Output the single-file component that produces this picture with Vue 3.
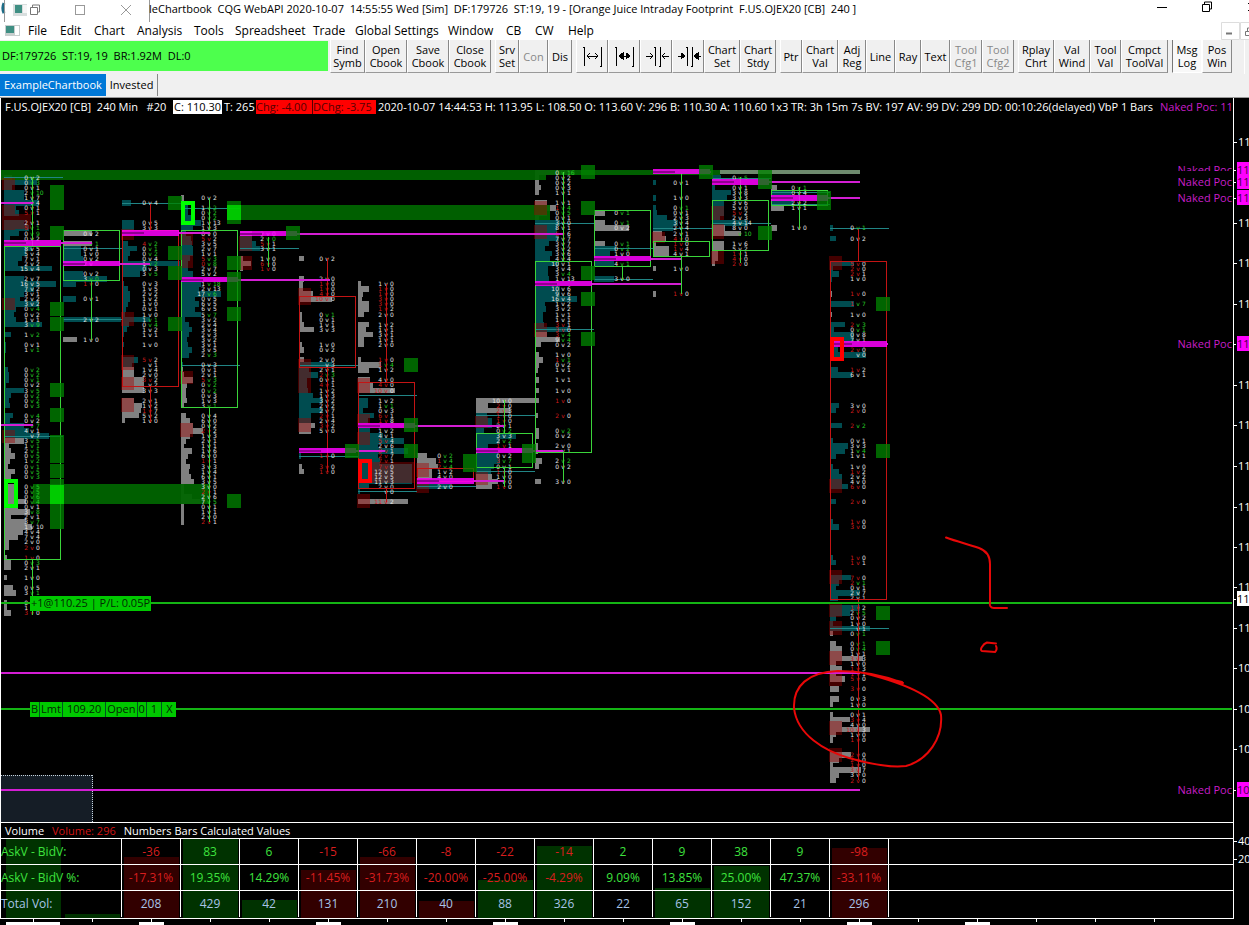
<script setup>
const ROW = 5.065
const rowY = (i) => 174.8 + i * ROW

const menus = ['File', 'Edit', 'Chart', 'Analysis', 'Tools', 'Spreadsheet', 'Trade', 'Global Settings', 'Window', 'CB', 'CW', 'Help']
const menuLefts = [28, 60, 94, 137, 194, 235, 313, 355, 448, 506, 535, 568, 602]

const groups = [
  [['Find Symb', 35], ['Open Cbook', 42], ['Save Cbook', 42], ['Close Cbook', 42]],
  [['Srv Set', 24], ['Con', 29, 'off'], ['Dis', 24]],
  [['Widen spacing', 32, 'icon', 0], ['Widen bars', 32, 'icon', 1], ['Narrow spacing', 32, 'icon', 2], ['Narrow bars', 32, 'icon', 3], ['Chart Set', 36], ['Chart Stdy', 36]],
  [['Ptr', 22], ['Chart Val', 36], ['Adj Reg', 28], ['Line', 29], ['Ray', 26], ['Text', 29], ['Tool Cfg1', 32, 'off'], ['Tool Cfg2', 32, 'off']],
  [['Rplay Chrt', 36], ['Val Wind', 36], ['Tool Val', 31], ['Cmpct ToolVal', 47]],
  [['Msg Log', 30, 'down'], ['Pos Win', 30]],
]
const icons = [
  'M2 2v19M19 2v19M1 2h2M18 21h2M5 11h11M8 8l-3 3 3 3M13 8l3 3-3 3',
  'M2 2v19M19 2v19M1 2h2M18 21h2M5 11h11M9 8l-4 3 4 3zM12 8l4 3-4 3z',
  'M9 2v19M14 2v19M8 2h2M13 21h2M0 11h7M4 8l3 3-3 3M23 11h-7M19 8l-3 3 3 3',
  'M9 2v19M14 2v19M8 2h2M13 21h2M0 11h7M3 8l4 3-4 3zM23 11h-7M20 8l-4 3 4 3z',
]

// "@n" jumps to a price row; other tokens are bid v ask : histogram width + tint
const sources = [
  '@0 0v2:8g 0v3g:33t 0v1:8t 2v10g:20t 1v7:20t v4:35t 0v1:12t r5v1:15t @9 2v1:20t r5v1g:25t 0v9g:15t 0v2:6t @14 8v5:28t 5v4:22t 7v1:18t 2v2:14t 15v4:48t @20 2v7:20t 16v5:52t 7v2:30t 3v1:20t 2v2:16t 3v2:35t 0v4g:12t 0v2:10t 1v1:12t 3v9g:38t @31 1v2g:7t @33 0v1:2t 1v1g:2t @38 0v2g:4t 0v2g:5t 0v1g:5t 0v2:2t 3v5g:20t 0v2g:7t 0v2g:5t 0v3g:6t @47 0v4g:9t 0v2:6t v7g:20t 4v1:25t v7:45t 3v5g:20g 1v1g:5g 2v1g:7g 0v5g:11g 1v2g:6g 0v1g:4g 0v5g:11g 0v3g:7g @61 0v5g:14g 0v5g:14g 0v6g:14g 0v4g:22g 0v1:14g 3v8g:26g 2v1:7g 3v7g:22g 1v10:28g 4v4:19g 7v4:14g 2v0:5g r2v0:5g @75 r1v0:3g 0v3g:7g 2v1:7g @79 1v0:3g @81 0v5:9g 3v1g:12g @84 0v:3g 1v:3g r3v0:7g',
  '@11 0v2:29g @13 v1g:29g 0v1:18t 1v0:18t 0v2:20t 2v:20t @19 0v2:20t 3v0g:44t r1v0:13t @24 0v1:13t @28 2v2:58t @32 1v0:14g',
  '@5 0v4:9t @9 0v5:12t 3v3:12t @13 r4v2g:6t 0v1g:15t 0v2g:8t 0v4:6t 1v2g:58t 0v3:25t 3v5g:18t @21 0v3:2t 1v5:6t 2v2:8t 1v2:8t 1v0:6t 0v1:4t 1v0:3t 1v1g:28t 0v4g:7t 1v2:5t 1v1:2t @33 1v0:2t @36 r5v2:16t v1:10t 1v4:12g 2v0:12g r3v2:22g v2:22g 3v3:22g @44 2v1:12g 1v2:20g r1v7:19g 5v2:17g 1v0:3g',
  '@4 0v2:3g @6 1v2g:7t 0v2g:7t 0v2g:10t 1v13:20t 1v3:12t 0v0:5t r5v2:10t 3v5:11t 2v7:12t 1v1:12t r5v3g:9t r0v8g:7t 2v7:7t 5v2:12t @21 1v18g:20t 2v13:18t 17v6g:40t 0v5:14t 6v5:18t 6v5:14t 5v7g:20t 3v2:4t 2v4:8t 3v4:11t 2v3:8t 3v2:6t 3v1:7t 3v5:11t 2v3g:8t @37 0v3:2t 0v1:2g 2v1:3g r5v3g:12g 0v2g:6g 0v2g:5g 0v3:5g 1v3:6g 3v1g:3g @47 0v4:5g 6v0:9g 0v2:12g r2v2:22g 1v3:9g 2v1:5g 1v1:3g 1v6:11g 6v0:7g r1v1:5g 3v3:9g 1v4:8g 6v1:10g 3v5:13g 3v0:3g r2v1:3g 2v6:11g 7v5g:19g 0v1:3g 1v1:3g 2v0:3g r2v1:3g',
  '@11 2v0:12g 2v0g:12t r5v1:16t 3v1:20t @16 1v0:3g r6v0:11g r1v0:3g',
  '@16 0v2:5g @20 2v0:5g r1v0:4g r1v0:4g r4v0:14g r10v0:33g @27 0v1g:3g 0v1:3g 1v1:5g 3v3:15g @33 1v0:3g 0v2:5g @36 2v0:5g v3:33t 2v1:10t r2v3g:19t 0v1:8t r4v1:8t 1v2:9t 1v3:14t 3v2:24t 2v2:12t 2v7:24t r2v1:12t 2v4:12t r3v2:16g 5v0:12g @55 r1v0:2t @57 r3v0:3g r1v0:5g',
  '@21 1v0:3g r1v0:11g r1v0:5g r3v0:4g r3v0:11g r1v2:11g 2v0:6g @29 1v2:11g 1v1:8g 3v1:15g 1v1:6g 2v0:6g @36 r1v0:3g r1v4g:23g 1v2:11g @40 4v0:12g r4v0:15g r10v0:37g @44 1v2:10t 1v1g:10t 0v3:5t r6v1:16t r1v8:10t @50 1v2:12t 4v1:25t r5v4:46t 2v6:20t r2v1:50t r2v7:20t r7v1:22t r7v0:54t 12v5:54t 12v5:54t 11v3:54t 2v0:11t v0:2t @64 r11v2:50g',
  '@55 0v2g:10g r1v4g:19g r2v4g:21g 1v2:15g 4v0:15g @61 2v0:33t',
  '@44 10v0:61g r2v0:12g r2v3:34g r1v0:11t r1v0:16t 2v1:16t 0v2g:8t 3v3:40t 2v2g:24t r1v1:12t @55 0v2:22t r3v7g:24t 0v1:18t r1v0:15t 1v0:16g v0:22g r1v0:16g',
  '@-1 0v16g:40g 0v2:4g 0v2:4g 0v3:6g 1v1:4g @5 1v1:12g r1v4g:21g 0v5g:12g 0v1:4g 3v0:25t 8v1:22t r5v6:22t 7v7:24t 3v7:14t 3v2:10t 3v6:17t 4v4:15t 10v1:24t 3v4:13t 3v4g:13t 1v13:14t @22 10v6:25t 9v6:25t 16v4:42t 1v2:10t 3v2:11t 1v1:8t 1v1:8t r3v1:9t r3v0:33t r3v4g:12g 9v4g:25g 0v2:6g @35 1v0:4g r1v1g:8g 0v2:4g 1v1:3g @40 1v1:4g @42 1v0:4g @44 r1v0:4g @47 r2v0:3g @50 0v2g:4g 0v2:4g @53 2v0:3g v1:3g @56 2v2g:7g 0v2:4g @60 3v0:6g',
  '@7 0v1g:11g @9 0v1g:11g 0v2:35g @13 0v1g:11g 0v2g:22t 1v0:16t @17 4v1g:20t @20 3v0:20t',
  '@1 0v1:3t @4 1v0:3t @6 0v1g:3t 0v1:4t 2v3:14t 3v4:25t 2v4:20t 2v1:9g r4v0:13g r1v0:3g r1v4:16g 4v1:16g @18 1v0:3g @23 r1v0:3g',
  '@0 0v5g:9t @2 0v1:3t 3v8:19t 3v3:15t 3v6:12t 5v0:12t r5v2:12t 2v3:8t 4v14:36t 8v0:13g v10g:29g @13 1v6:12g 5v2:12g r1v1:6g r4v0:6g r2v0:3g',
  '@2 0v1g:6g 0v4:20t @5 2v2:22t 1v1:13g @10 1v0:6g',
  '@10 0v1g:3t @12 0v2:6t @17 r5v0:24t r2v0:3t r2v1:9t 1v0:2t @23 r1v0:2g @25 r1v7g:24t @27 1v0:2g @29 r2v3g:15t 0v1g:4t 0v8:24t 7v1:24t @34 r2v0:8t v0:36t @38 r1v2:8t 6v1:22t @45 3v0:9t r2v0:6t @49 r2v2g:12t @52 0v1:3t 3v3:18t 1v4g:15t 1v1:6t @57 1v0:3t r1v2:9t 2v2:12t 4v0:12t r6v0:18t @64 r2v0:6t @68 r1v0:3t r3v0:9t @75 r1v0:3t r1v1:6t @79 r7v0:21t r2v1g:9t 0v1:6t 2v7:30t 2v1:8t @85 r1v2:30t 2v5g:20t 0v2:6t 1v0:3t v1:40t 0v1g:3g @92 0v1g:6g 0v4g:12g 1v1:12g r3v3:33g 1v0:6g r1v3:12g r1v1:6g r5v0:15g @101 r3v0:9g @103 0v3:9g 1v0:3g @106 0v1:3g r3v4:20g 4v0:12g r10v3:40g 1v0:6g r1v0:3g @114 r2v0:21g r2v0:9g r1v0:3g r3v7:31g 3v0:9g r2v0:6g',
]
const cells = sources.flatMap((src, col) => {
  let i = 0
  const out = []
  for (const token of src.split(' ')) {
    if (token[0] === '@') { i = Number(token.slice(1)); continue }
    const m = token.match(/^(r?)(\d*)v(\d*)(g?):(\d+)([tg])$/)
    out.push({ x: 4 + col * 59, y: rowY(i), bid: m[2], ask: m[3], w: Number(m[5]), tint: m[6] === 't' ? 'teal' : 'gray',
      bidTone: m[1] ? 'dn' : 'nt', askTone: m[4] ? 'up' : 'nt', midTone: m[4] ? 'up' : m[1] ? 'dn' : 'nt' })
    i++
  }
  return out
})

// zones and squares: x, y, width, height
const zones = [[1, 170, 545, 10], [546, 170, 174, 5], [240, 205, 310, 15], [33, 484, 177, 20]]
const sq = (x, list) => list.map(([a, b]) => [x, a, 14, b - a])
const greens = [
  ...sq(50, [[185, 210], [226, 240], [302, 316], [317, 331], [383, 397], [408, 422], [435, 449], [449, 463], [464, 478], [479, 529]]),
  ...sq(168, [[196, 210], [246, 260], [266, 280], [317, 331]]),
  ...sq(227, [[201, 224], [256, 270], [272, 301], [307, 321], [494, 508]]),
  ...sq(286, [[226, 240]]), ...sq(345, [[444, 458]]), ...sq(404, [[358, 372], [418, 432], [444, 458]]),
  ...sq(463, [[454, 472]]), ...sq(522, [[444, 463]]),
  ...sq(581, [[165, 179], [201, 215], [266, 280], [292, 306], [332, 346]]),
  ...sq(699, [[165, 179]]), ...sq(758, [[170, 189], [226, 240]]), ...sq(817, [[191, 210]]),
  ...sq(876, [[297, 311], [444, 458], [606, 620], [641, 655]]),
]
const brights = [[50, 485, 14, 19], [227, 205, 14, 15]]
const rd = (x, list) => list.map(([a, b]) => [x, a, 13, b - a])
const reds = [
  ...rd(2, [[178, 190], [205, 230], [298, 310], [430, 443]]), [15, 214, 16, 15],
  ...rd(121, [[229, 240], [312, 326], [355, 370], [377, 390], [398, 412]]),
  ...rd(180, [[232, 245], [255, 268], [371, 384], [423, 437]]),
  ...rd(239, [[236, 251], [256, 270]]), ...rd(298, [[288, 305], [359, 393], [418, 432]]),
  ...rd(357, [[378, 393], [414, 427], [432, 445], [494, 508]]), [372, 462, 43, 21],
  ...rd(416, [[463, 477], [478, 493]]), ...rd(475, [[416, 428], [471, 485]]),
  ...rd(534, [[201, 215], [225, 239], [323, 337]]), ...rd(652, [[232, 243]]),
  ...rd(711, [[206, 220], [224, 239], [251, 264]]),
  ...rd(829, [[256, 270], [479, 493], [570, 584], [603, 617], [621, 635], [651, 665], [672, 686], [721, 735], [748, 762]]),
]
const highlights = [[183, 203, 10, 20, 'hi-up'], [6, 481, 10, 25, 'hi-up'], [360, 461, 10, 20, 'hi-dn'], [832, 339, 10, 20, 'hi-dn']]
// POC bands: x, y, height, end of the extension line
const pocs = [[4, 240, 6, 92], [63, 261, 5, 150], [122, 230, 6, 210], [181, 277, 5, 330], [240, 231, 5, 563], [299, 448, 5, 385], [358, 423, 5, 504], [417, 478, 6, 504], [476, 448, 5, 563], [535, 281, 5, 681], [594, 256, 5, 681], [653, 169, 5, 711], [712, 179, 6, 860], [771, 195, 6, 860], [830, 341, 6, 888]]
const pocLines = [[1, 203, 33], [1, 425, 33], [1, 673, 860], [1, 790, 860]]
const bodies = [[4, 246, 559, 'up'], [63, 230, 280, 'up'], [122, 230, 386, 'dn'], [181, 230, 407, 'up'], [299, 296, 367, 'dn'], [358, 382, 488, 'dn'], [417, 468, 481, 'dn'], [476, 433, 467, 'up'], [535, 261, 452, 'up'], [594, 210, 266, 'up'], [653, 241, 256, 'up'], [712, 200, 250, 'up'], [771, 190, 205, 'up'], [830, 261, 599, 'dn']]
const wicks = [[32, 177, 246, 'up'], [32, 559, 615, 'up'], [91, 280, 340, 'up'], [150, 204, 230, 'dn'], [150, 386, 422, 'dn'], [209, 198, 230, 'up'], [209, 407, 522, 'up'], [268, 237, 267, 'up'], [327, 258, 296, 'dn'], [327, 367, 472, 'dn'], [386, 284, 382, 'dn'], [386, 488, 502, 'dn'], [504, 400, 433, 'up'], [504, 467, 487, 'up'], [563, 172, 261, 'up'], [563, 452, 482, 'up'], [622, 266, 280, 'up'], [681, 173, 241, 'up'], [681, 256, 294, 'up'], [740, 177, 200, 'up'], [740, 250, 263, 'up'], [799, 187, 229, 'up'], [858, 229, 261, 'dn'], [858, 599, 780, 'dn']]
const teals = [[4, 177], [4, 436], [63, 248], [63, 319], [122, 203], [181, 208], [181, 365], [240, 248], [299, 365], [299, 456], [358, 395], [358, 491], [417, 486], [476, 415], [476, 471], [535, 223], [535, 329], [594, 248], [594, 279], [653, 228], [712, 223], [712, 178], [771, 192], [771, 204], [830, 228], [830, 628]]

const pocLabels = [[170, 'cut'], [182, ''], [198, ''], [344, ''], [790, '']]
const axis = [[142, '113.40'], [223, '113.00'], [263, '112.60'], [304, '112.20'], [385, '111.80'], [425, '111.40'], [466, '111.20'], [507, '111.00'], [547, '110.80'], [587, '110.40'], [628, '110.00'], [668, '109.60'], [709, '109.20'], [749, '108.80'], [170, '113.65', 'mark'], [182, '113.55', 'mark'], [198, '113.40', 'mark'], [344, '111.95', 'mark'], [599, '110.25', 'last'], [790, '108.50', 'mark'], [841, '400'], [859, '200']]

const stats = [
  ['AskV - BidV:', -36, 83, 6, -15, -66, -8, -22, -14, 2, 9, 38, 9, -98],
  ['AskV - BidV %:', '-17.31%', '19.35%', '14.29%', '-11.45%', '-31.73%', '-20.00%', '-25.00%', '-4.29%', '9.09%', '13.85%', '25.00%', '47.37%', '-33.11%'],
  ['Total Vol:', 208, 429, 42, 131, 210, 40, 88, 326, 22, 65, 152, 21, 296],
]
const tone = (r, v) => (r === 2 ? 'vol' : String(v).startsWith('-') ? 'neg' : 'pos')
const volumes = [[6, 79, 'v-up'], [65, 4, 'v-up'], [124, 61, 'v-dn'], [183, 79, 'v-up'], [242, 18, 'v-up'], [301, 48, 'v-dn'], [360, 61, 'v-dn'], [419, 17, 'v-dn'], [478, 38, 'v-up'], [537, 72, 'v-up'], [655, 30, 'v-up'], [714, 52, 'v-up'], [832, 70, 'v-dn']]
const ticks = Array.from({ length: 20 }, (_, k) => 33 + k * 59)
const dates = [[6, 54], [139, 25], [316, 25], [493, 25], [670, 25], [847, 25], [965, 25]]
</script>

<template>
  <div class="app">
    <header class="title">
      <div class="ghost">
        <svg width="150" height="24" viewBox="0 0 150 24">
          <path d="M4 3a12 12 0 0 0 0 10" stroke="#1d6c86" stroke-width="3" fill="none" />
          <path d="M4.500 0v24M149.500 0v24" stroke="#999" />
          <rect x="13" y="4" width="14" height="12" fill="#d8dede" /><rect x="15" y="5" width="7" height="8" fill="#3f8f83" /><rect x="23" y="5" width="4" height="8" fill="#f6f6f6" />
          <path d="M30.500 7.500h7v7h-7zM32.500 7v-2h7v7h-2" fill="none" stroke="#777" />
          <rect x="75.500" y="5.500" width="9" height="9" fill="none" stroke="#999" />
          <path d="M121 5l10 10M131 5l-10 10" stroke="#999" />
        </svg>
      </div>
      <span class="title-text">leChartbook&nbsp; CQG WebAPI 2020-10-07&nbsp; 14:55:55 Wed [Sim]&nbsp; DF:179726&nbsp; ST:19, 19 - [Orange Juice Intraday Footprint&nbsp; F.US.OJEX20 [CB]&nbsp; 240 ]</span>
      <svg class="win" width="92" height="22" viewBox="0 0 92 22"><path d="M0 7.500h10M45.500 4.500h7v7h-7zM47.500 4v-2h7v7h-2M91 3l8 8M91 11l8-8" fill="none" stroke="#000" /></svg>
    </header>
    <nav class="menu">
      <svg class="doc" width="16" height="12" viewBox="0 0 16 12"><rect x="0" y="0" width="15" height="11" fill="#c8cece" /><rect x="1" y="1" width="8" height="7" fill="#3f8f83" /><rect x="10" y="1" width="4" height="9" fill="#fff" /></svg>
      <button v-for="(m, i) in menus" :key="m" :style="{ width: menuLefts[i + 1] - menuLefts[i] + 'px' }">{{ m }}</button>
      <svg class="mdi" width="28" height="18" viewBox="0 0 28 18"><path d="M.5 .5h18v17h-18zM19.500 .5h18v17h-18z" fill="none" stroke="#ddd" /><path d="M5 11.500h6" stroke="#777" stroke-width="2" /><path d="M24.500 9.500h6v4h-6zM26.500 9v-3h6" stroke="#777" fill="none" /></svg>
    </nav>
    <div class="tools">
      <output class="status">DF:179726&nbsp; ST:19, 19&nbsp; BR:1.92M&nbsp; DL:0</output>
      <div v-for="(g, gi) in groups" :key="gi" class="group">
        <button v-for="b in g" :key="b[0]" :class="b[2]" :disabled="b[2] === 'off'" :aria-label="b[0]" :style="{ width: b[1] + 'px' }">
          <svg v-if="b[2] === 'icon'" width="20" height="23" viewBox="0 0 20 23"><path :d="icons[b[3]]" fill="none" stroke="#000" shape-rendering="crispEdges" :class="{ solid: b[3] % 2 }" /></svg>
          <span v-else>{{ b[0] }}</span>
        </button>
      </div>
      <div class="group rest"></div>
    </div>
    <div class="tabs">
      <button class="on">ExampleChartbook</button><button>Invested</button>
    </div>
    <main class="chart">
      <div class="view">
        <section class="plot">
          <div class="info">
            <span class="sym">F.US.OJEX20 [CB]&nbsp; 240 Min&nbsp;&nbsp; #20</span><span class="close">C: 110.30</span><span class="t">T: 265</span><span class="chg">Chg: -4.00</span><span class="chg d">DChg: -3.75</span><span class="long">2020-10-07 14:44:53 H: 113.95 L: 108.50 O: 113.60 V: 296 B: 110.30 A: 110.60 1x3 TR: 3h 15m 7s BV: 197 AV: 99 DV: 299 DD: 00:10:26(delayed) VbP 1 Bars</span><span class="naked">Naked Poc: 11</span>
          </div>
          <svg class="canvas" width="100%" height="724" aria-label="Footprint chart">
            <g transform="translate(0,-98)" shape-rendering="crispEdges">
              <rect v-for="(c, i) in cells" :key="'h' + i" :x="c.x" :y="c.y" :width="c.w" height="5.500" :class="c.tint" />
              <rect v-for="(z, i) in zones" :key="'z' + i" :x="z[0]" :y="z[1]" :width="z[2]" :height="z[3]" class="zone" />
              <rect x="720" y="170" width="140" height="4" fill="#6d8a6d" />
              <rect v-for="(z, i) in reds" :key="'r' + i" :x="z[0]" :y="z[1]" :width="z[2]" :height="z[3]" class="redsq" />
              <line v-for="(t, i) in teals" :key="'t' + i" :x1="t[0]" :x2="t[0] + 59" :y1="t[1] + 0.5" :y2="t[1] + 0.5" class="tline" />
              <g class="nums">
                <template v-for="(c, i) in cells" :key="'n' + i">
                  <text :x="c.x + 24" :y="c.y + 5" text-anchor="end" :class="c.bidTone">{{ c.bid }}</text>
                  <text :x="c.x + 28" :y="c.y + 5" text-anchor="middle" :class="c.midTone">v</text>
                  <text :x="c.x + 32" :y="c.y + 5" :class="c.askTone">{{ c.ask }}</text>
                </template>
              </g>
              <line v-for="(w, i) in wicks" :key="'w' + i" :x1="w[0] + 0.5" :x2="w[0] + 0.5" :y1="w[1]" :y2="w[2]" :class="'s-' + w[3]" />
              <rect v-for="(b, i) in bodies" :key="'b' + i" :x="b[0] + 0.5" :y="b[1] + 0.5" width="56" :height="b[2] - b[1]" :class="'s-' + b[3]" />
              <g v-for="(p, i) in pocs" :key="'p' + i">
                <rect :x="p[0]" :y="p[1]" width="57" :height="p[2]" class="poc" />
                <rect :x="p[0]" :y="p[1] + 2" width="22" height="2" fill="#900090" />
                <rect v-if="p[3] > p[0] + 57" :x="p[0] + 57" :y="p[1] + 2" :width="p[3] - p[0] - 57" height="2" class="pocline" />
              </g>
              <rect v-for="(z, i) in greens" :key="'g' + i" :x="z[0]" :y="z[1]" :width="z[2]" :height="z[3]" class="greensq" />
              <rect v-for="(z, i) in brights" :key="'br' + i" :x="z[0]" :y="z[1]" :width="z[2]" :height="z[3]" fill="#00e000" fill-opacity=".8" />
              <rect v-for="(h, i) in highlights" :key="'hl' + i" :x="h[0]" :y="h[1]" :width="h[2]" :height="h[3]" :class="h[4]" />
              <rect x="1" y="775" width="92" height="47" fill="#151d26" />
              <path d="M1 775.500h92M92.500 775v47" stroke="#c8d4de" stroke-dasharray="1 1" fill="none" />
              <rect v-for="(p, i) in pocLines" :key="'pl' + i" :x="p[0]" :y="p[1] - 1" :width="p[2] - p[0]" height="2" class="pocline" />
              <rect x="1" y="602" width="100%" height="2" class="order" />
              <rect x="1" y="708" width="100%" height="2" class="order" />
            </g>
            <g transform="translate(0,-98)" fill="none" stroke="#e80808" stroke-width="2" stroke-linecap="round">
              <path d="M946 537.500C958 542 968 544 979 548Q990 552 990 564V602Q989 608 994 608H1007" />
              <path d="M996 643.500L987 642.500C983 644 979 650 982 651L995 652C997 650 997 648 996 646" />
              <path d="M903 683C885 676 860 671 838 671C808 672 793 686 794 708C797 735 825 751 849 758C870 764 890 768 906 766C928 760 943 738 941 715C938 700 915 686 864 673L902 682" />
            </g>
          </svg>
          <button class="tag position">+1@110.25 | P/L: 0.05P</button>
          <button class="tag limit"><span>B</span><span>Lmt</span><span class="price">109.20</span><span>Open</span><span>0</span><span class="qty">1</span><span class="qty">X</span></button>
          <span v-for="p in pocLabels" :key="p[0]" class="poclabel" :class="p[1]" :style="{ top: p[0] - 106 + 'px' }">Naked Poc</span>
        </section>
        <section class="study">
          <h2><span>Volume</span><span class="v">Volume: 296</span><span>Numbers Bars Calculated Values</span></h2>
          <div class="grid">
            <svg class="vols" width="100%" height="79"><rect v-for="v in volumes" :key="v[0]" :x="v[0]" :y="79 - v[1]" width="55" :height="v[1]" :class="v[2]" /></svg>
            <table>
              <tbody>
                <tr v-for="(row, r) in stats" :key="row[0]">
                  <th scope="row" :class="r === 2 ? 'vol' : 'pos'">{{ row[0] }}</th>
                  <td v-for="(v, i) in row.slice(1)" :key="i" :class="tone(r, v)">{{ v }}</td>
                  <td class="fill"></td>
                </tr>
              </tbody>
            </table>
          </div>
        </section>
      </div>
      <aside class="axis">
        <span v-for="a in axis" :key="a[0] + a[1]" :class="a[2]" :style="{ top: a[0] - 106 + 'px' }">{{ a[1].slice(0, 2) }}</span>
      </aside>
    </main>
    <footer class="times">
      <svg width="100%" height="6"><rect v-for="t in ticks" :key="t" :x="t" y="0" width="1" height="3" fill="#fff" /><rect v-for="d in dates" :key="'d' + d[0]" :x="d[0]" y="3" :width="d[1]" height="3" fill="#fff" /></svg>
    </footer>
  </div>
</template>

<style>
body { margin: 0; background: #000; overflow: hidden; }
</style>
<style scoped>
.app { font: 12px/16px "Open Sans", "Noto Sans", sans-serif; color: #000; background: #000; }
button { font: inherit; color: inherit; border: 0; padding: 0; background: none; }
.title { display: flex; height: 22px; background: #fff; overflow: hidden; }
.ghost { flex: none; width: 149px; }
.title-text { flex: 1; white-space: pre; font-size: 11px; line-height: 18px; }
.win { flex: none; }
.menu { display: flex; height: 18px; background: #fff; padding-left: 5px; align-items: center; }
.menu button { text-align: left; white-space: nowrap; line-height: 16px; }
.menu .doc { width: 16px; margin-right: 7px; flex: none; }
.mdi { margin-left: auto; }
.tools { display: flex; height: 34px; background: #f0f0f0; gap: 4px; overflow: hidden; font-size: 11px; }
.status { flex: 1; background: #4dff4d; height: 30px; line-height: 30px; margin: 1px 0; padding-left: 2px; margin-right: -2px; white-space: nowrap; }
.group { display: flex; flex: none; }
.group button { box-sizing: border-box; height: 33px; border-right: 1px solid #888; border-bottom: 1px solid #999; border-left: 1px solid #fff; line-height: 13px; display: flex; align-items: center; justify-content: center; text-align: center; }
.group button.off { color: #888; }
.group button.down { background: #f8f8f8; border-left-color: #777; border-right-color: #fff; border-bottom-color: #fff; }
.group svg { overflow: visible; }
.solid { fill: #000; }
.rest { width: 4px; margin-left: 8px; border-left: 1px solid #fff; }
.tabs { display: flex; height: 23px; background: #f0f0f0; border-bottom: 1px solid #999; font-size: 11px; }
.tabs button { height: 22px; padding: 0 4px; border-right: 1px solid #888; }
.tabs .on { background: #0078d7; color: #fff; border: 0; }
.chart { display: flex; border-left: 1px solid #fff; }
.view { flex: 1; min-width: 0; border-right: 1px solid #fff; border-bottom: 1px solid #fff; overflow: hidden; }
.plot { position: relative; height: 724px; overflow: hidden; border-bottom: 1px solid #fff; }
.canvas { display: block; margin-left: -1px; }
.info { position: absolute; z-index: 1; top: 2px; left: 4px; right: 0; display: flex; color: #fff; white-space: pre; font-size: 11px; line-height: 14px; overflow: hidden; }
.info span { flex: none; }
.sym { width: 168px; }
.close { background: #fff; color: #000; width: 48px; padding-left: 1px; }
.t { width: 32px; padding-left: 2px; }
.chg { background: #f00; color: #500; width: 56px; }
.chg.d { width: 63px; border-left: 1px solid #500; }
.long { margin-left: 2px; width: 782px; }
.naked, .poclabel { color: #c81ec8; font-size: 11px; }
.poclabel { position: absolute; right: 1px; line-height: 16px; }
.poclabel.cut { height: 9px; overflow: hidden; }
.tag { position: absolute; left: 29px; background: #00c800; color: #032803; height: 15px; font-size: 11px; line-height: 14px; white-space: nowrap; display: flex; padding: 0 1px; }
.position { top: 498px; }
.limit { top: 604px; padding: 0; }
.limit span { border-right: 1px solid #052; padding: 0 1px; }
.limit .price { padding: 0 4px; }
.limit .qty { padding: 0 4px; }
.limit span:last-child { border: 0; }
.teal { fill: #004c50; }
.gray { fill: #808080; }
.zone { fill: #006400; fill-opacity: .95; }
.redsq { fill: #a00000; fill-opacity: .42; }
.greensq { fill: #008200; fill-opacity: .78; }
.tline { stroke: #218585; }
.nums { font: 6px/6px "DejaVu Sans", sans-serif; }
.nt { fill: #e4e4e4; }
.up { fill: #26cc26; }
.dn { fill: #d01c1c; }
.s-up { stroke: #3ad43a; fill: none; }
.s-dn { stroke: #c41414; fill: none; }
.poc { fill: #f0f; fill-opacity: .85; }
.pocline { fill: #d41ed4; }
.order { fill: #14b414; }
.hi-up { stroke: #0f0; stroke-width: 4; fill: none; }
.hi-dn { stroke: #f00; stroke-width: 4; fill: none; }
.study { color: #fff; }
.study h2 { margin: 0; padding-left: 4px; font-size: 11px; font-weight: 400; line-height: 15px; height: 15px; display: flex; gap: 8px; }
.study .v { color: #d01414; }
.grid { position: relative; border-top: 1px solid #fff; height: 80px; box-sizing: border-box; }
.vols { position: absolute; left: -1px; top: 0; }
.v-up { fill: #003200; }
.v-dn { fill: #320000; }
table { position: relative; width: 100%; table-layout: fixed; border-collapse: separate; border-spacing: 0; }
th, td { box-sizing: border-box; height: 26px; padding: 0; width: 59px; font-weight: 400; text-align: center; border-bottom: 1px solid #fff; border-right: 1px solid #fff; }
tr:last-child th, tr:last-child td { border-bottom: 0; }
th { width: 121px; text-align: left; white-space: nowrap; }
td.fill { width: auto; border-right: 0; }
.pos { color: #3ee23e; }
.neg { color: #d81e1e; }
.vol { color: #a8c4e8; }
.axis { position: relative; flex: none; width: 15px; overflow: hidden; color: #fff; font-size: 11px; }
.axis span { position: absolute; left: 4px; right: 0; line-height: 15px; }
.axis span::before { content: ""; position: absolute; left: -4px; top: 8px; width: 3px; height: 1px; background: #fff; }
.axis .mark { left: 3px; background: #f0f; color: #400040; }
.axis .last { left: 3px; background: #fff; color: #000; }
.times svg { display: block; }
</style>
